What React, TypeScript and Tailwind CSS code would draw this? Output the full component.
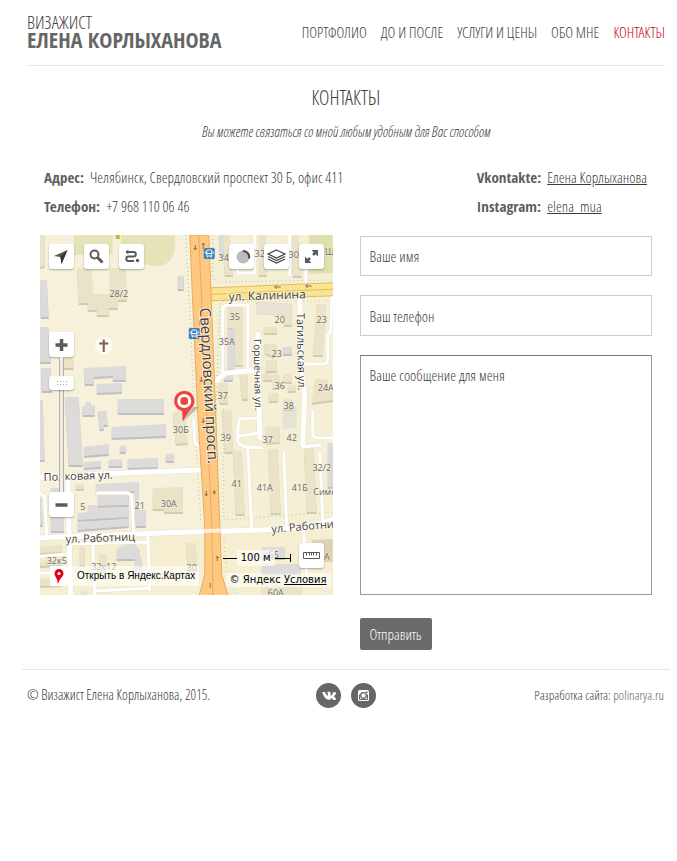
import type { ReactNode } from "react";

const NAV = ["Портфолио", "До и после", "Услуги и цены", "Обо мне", "Контакты"];

const GREY_BUILDINGS = [
  "0,45 7,45 9,82 1,82",
  "0,92 9,92 11,127 0,127",
  "1,133 11,133 12,156 2,156",
  "0,165 3,165 5,225 0,225",
  "25,162 39,162 43,230 29,230",
  "44,133 86,131 86,145 73,145 73,141 54,142 54,149 45,149",
  "57,149 82,148 82,157 57,158",
  "42,172 46,171 46,167 51,167 51,170 55,170 55,180 43,180",
  "58,176 67,176 68,190 64,190 64,194 60,194",
  "78,164 124,164 124,178 78,178",
  "72,192 126,189 126,201 72,203",
  "44,212 69,209 69,219 44,221",
  "80,211 86,210 86,217 80,217",
  "44,227 61,226 61,232 44,233",
  "69,225 82,224 82,231 69,231",
  "88,224 118,223 118,232 88,233",
  "126,219 134,218 134,226 126,226",
  "56,249 99,247 99,275 106,275 106,291 96,291 95,256 56,257",
  "58,260 89,258 89,270 58,271",
  "48,270 58,270 58,273 89,272 89,282 38,285 38,278 48,277",
  "38,287 89,284 89,291 38,295",
  "77,314 88,309 95,309 100,315 100,323 102,323 102,340 95,340 95,324 77,324",
  "11,253 24,253 24,296 11,296",
  "0,262 2,262 3,290 0,290",
  "138,41 144,41 144,54 138,54",
  "179,0 183,0 184,20 180,20",
  "188,94 195,94 195,134 188,134",
  "184,138 193,138 193,145 184,145",
  "243,112 252,112 252,119 243,119",
  "288,208 293,208 293,252 288,252",
  "222,312 245,312 245,323 222,323",
  "222,329 261,329 261,338 222,338",
];

const BEIGE_BUILDINGS = [
  "37,33 52,33 53,59 70,59 70,33 86,33 87,65 78,65 78,73 69,73 69,80 57,80 57,75 48,75 48,68 39,68",
  "24,123 34,123 34,133 24,133",
  "0,0 5,0 5,31 0,32",
  "133,177 145,176 148,208 136,209",
  "0,312 22,310 22,317 0,318",
  "0,326 22,324 22,330 0,331",
  "0,344 22,343 22,350 0,351",
  "40,312 45,312 45,330 40,330",
  "60,319 67,319 67,336 60,336",
  "41,356 47,356 47,360 41,360",
  "146,308 156,308 158,335 148,335",
  "113,253 143,252 143,277 124,277 124,274 113,274",
  "36,249 44,249 44,254 36,254",
  "182,0 190,0 193,40 185,40",
  "219,0 226,0 227,40 219,40",
  "252,0 259,0 262,41 253,41",
  "188,68 203,68 203,130 195,130 194,93 188,93",
  "244,77 252,77 252,90 244,90",
  "224,92 237,92 237,98 224,98",
  "224,109 237,109 237,118 234,122 225,118",
  "226,125 237,125 237,136 226,136",
  "223,138 232,138 232,145 223,145",
  "233,139 240,139 240,153 233,153",
  "243,139 252,139 252,147 243,147",
  "229,158 238,158 238,166 229,166",
  "248,150 256,150 256,156 248,156",
  "244,164 253,164 253,174 244,174",
  "277,69 286,69 283,120 273,120",
  "275,144 288,144 288,152 293,152 293,165 272,168",
  "178,148 188,148 188,168 180,168",
  "200,140 208,140 208,164 202,164",
  "182,175 192,175 193,217 185,217",
  "226,192 240,191 240,207 226,208",
  "193,215 202,215 205,279 196,279",
  "228,214 238,214 241,278 231,278",
  "264,213 274,213 277,277 267,277",
  "222,348 262,346 262,360 222,360",
];

const HOUSE_NUMBERS: [string, number, number][] = [
  ["28/2", 79, 62],
  ["30Б", 141, 198],
  ["30А", 129, 272],
  ["21", 100, 274],
  ["5", 43, 275],
  ["32к5", 17, 329],
  ["32к12", 64, 335],
  ["34", 184, 26],
  ["32", 220, 22],
  ["30", 254, 23],
  ["35", 195, 85],
  ["20", 240, 88],
  ["23", 282, 88],
  ["35А", 187, 110],
  ["23", 237, 122],
  ["37", 183, 164],
  ["36", 240, 154],
  ["24А", 286, 156],
  ["38", 249, 174],
  ["39", 186, 206],
  ["37", 228, 208],
  ["42", 252, 206],
  ["32/2", 282, 236],
  ["41", 197, 252],
  ["41А", 225, 256],
  ["41Б", 260, 256],
  ["Симе", 285, 260],
  ["Ш", 290, 20],
  ["65", 234, 323],
  ["А", 287, 325],
  ["60А", 236, 361],
  ["30", 152, 336],
];

function Buildings({ shapes, fill, shade }: { shapes: string[]; fill: string; shade: string }) {
  return (
    <g>
      {shapes.map((points) => (
        <g key={points}>
          <polygon points={points} fill={shade} transform="translate(0 2)" />
          <polygon points={points} fill={fill} />
        </g>
      ))}
    </g>
  );
}

function BusStop({ x, y }: { x: number; y: number }) {
  return (
    <g transform={`translate(${x} ${y})`}>
      <rect width="11" height="11" rx="1.500" fill="#3b7fc4" />
      <rect x="3" y="2" width="5" height="6" rx="1" fill="none" stroke="#fff" />
      <path d="M3 5.500h5M3.500 8v1.500M7.500 8v1.500M1.500 3.500v2M9.500 3.500v2" stroke="#fff" />
    </g>
  );
}

function CityMap() {
  return (
    <svg
      className="block h-full w-full"
      viewBox="0 0 293 360"
      preserveAspectRatio="xMidYMid slice"
      role="img"
      aria-label="Карта"
    >
      <rect width="293" height="360" fill="#f7f0da" />
      <path d="M153 0H293V360H184L170 290Z" fill="#f5efd6" />
      <path d="M0 304L293 291V360H0Z" fill="#f5eed0" />
      <path d="M34 0H73V19L34 20Z M81 0H135V12Q134 31 115 31L102 29L81 12Z" fill="#e5e4b8" />
      <path d="M269 0H293V38L269 39Z" fill="#dfe0ad" />
      <path d="M76 0H80V4H76Z" fill="#d8ae3a" />
      <path d="M217 67L252 69V81L217 79Z" fill="#e6e2d6" stroke="#dbd6c8" strokeDasharray="2 2" />
      <path d="M243 173L257 171V193L243 194Z" fill="#e6e2d6" />
      <path d="M272 305L293 304V327H272Z" fill="#ddd3b4" />
      <Buildings shapes={BEIGE_BUILDINGS} fill="#ebe3c8" shade="#d3cbb0" />
      <Buildings shapes={GREY_BUILDINGS} fill="#dddada" shade="#c0bec5" />
      <path
        d="M146 0L151 95L155 190L161 285M173 0V40Q174 47 182 47L293 45M172 285L180 70Q181 66 188 66H293M184 165L184 285L293 277M172 304H184L188 350L198 360"
        fill="none"
        stroke="#b9cf96"
        strokeWidth="1.200"
        strokeDasharray="1 3"
      />
      {[
        { stroke: "#e6e0d0", grow: 1 },
        { stroke: "#ffffff", grow: 0 },
      ].map(({ stroke, grow }) => (
        <g key={stroke} fill="none" stroke={stroke} strokeLinecap="round" strokeLinejoin="round">
          <path
            strokeWidth={5 + grow}
            d="M-4 243L60 239L159 235M-4 303L150 297L224 295L262 293Q280 290 297 283M28 243L31 364M218 99L220 203M260 60L261 128L265 160L263 210M176 146L186 138L218 135"
          />
          <path
            strokeWidth={3 + grow}
            d="M183 137V75Q183 70 188 70H208V133M266 30V50M262 129H284Q288 129 288 124V100L291 96L292 60M198 30V38H215V0M250 0V40M220 183L200 184Q198 186 198 205Q198 210 206 212L222 213M199 201L219 198M208 213L212 294M244 218L247 292M263 212L280 210M280 218L283 285M273 176L273 200Q274 203 280 203H297M264 297L267 345M154 185L155 208L160 212M58 258H88Q92 259 92 264L94 297M-4 258Q5 258 5 264L7 300M32 309L109 307M108 300L110 355M53 309L55 364M55 356L110 353M-4 322L28 319M-4 338H28"
          />
        </g>
      ))}
      <path d="M166 59.500L297 54" stroke="#e0bd5b" strokeWidth="14" />
      <path d="M166 59.500L297 54" stroke="#fbe491" strokeWidth="12" />
      <path d="M166 59.500L297 54" stroke="#e0bd5b" />
      <path d="M150 0H169L176 180L180 290L182 340L189 362H159L165 340L165 290L158 180Z" fill="#fec880" stroke="#e8ab62" />
      <path d="M159 0L167 180L172 290L173 342V360" fill="none" stroke="#e8ab62" />
      <path d="M164.500 296L180.500 295.500" stroke="#ffefdb" strokeWidth="4" />
      <g stroke="#8b7352" fill="none">
        <path d="M155.500 10v5M163.500 14v-6M166.500 261v-5M174.500 255v5M177.500 321v5M170.500 353v-5M235 52h6M266 51h6M160 90v-5M161.500 142v5M163.500 183v5" />
        <path d="M154 13l1.500 2 1.500-2M162 10l1.500-2 1.500 2M173 258l1.500-2 1.500 2M165 259l1.500 2 1.500-2M176 323l1.500-2 1.500 2M237 50l-2 2 2 2M268 49l-2 2 2 2M160 145l1.500 2 1.500-2M162 186l1.500 2 1.500-2" />
      </g>
      <BusStop x={164} y={13} />
      <BusStop x={149} y={93} />
      <circle cx="64" cy="110.500" r="9" fill="#fdfbf3" />
      <path d="M64 104.500V117M59.500 108.500H68.500" stroke="#7a6048" strokeWidth="2" />
      <g
        fontFamily='"Open Sans", sans-serif'
        fontSize="9"
        fill="#6d6a68"
        stroke="#f6f0dc"
        strokeWidth="1.500"
        strokeOpacity="0.600"
        paintOrder="stroke"
        textAnchor="middle"
      >
        {HOUSE_NUMBERS.map(([label, x, y]) => (
          <text key={`${label}-${x}`} x={x} y={y}>
            {label}
          </text>
        ))}
      </g>
      <g
        fontFamily='"Open Sans", sans-serif'
        fontSize="11"
        fill="#3f3f3f"
        stroke="#fffdf5"
        strokeWidth="2"
        strokeOpacity="0.700"
        paintOrder="stroke"
      >
        <text transform="translate(189 66) rotate(-2)" fontSize="12">ул. Калинина</text>
        <text transform="translate(160 73) rotate(87)" fontSize="15">Свердловский просп.</text>
        <text transform="translate(214 104) rotate(89)" fontSize="10">Горшечная ул.</text>
        <text transform="translate(257 78) rotate(89)" fontSize="11">Тагильская ул.</text>
        <text transform="translate(4 246) rotate(-2)">Полковая ул.</text>
        <text transform="translate(26 308) rotate(-2)">ул. Работниц</text>
        <text transform="translate(232 298) rotate(-5)">ул. Работниц</text>
      </g>
      <path d="M143 187L159 172L151 172Z" fill="#8b8370" opacity="0.500" />
      <path
        d="M144.500 155.500a10.500 10.500 0 0 1 8 17.300Q147 180 142.500 188L142 176.200a10.500 10.500 0 0 1 2.500-20.700Z"
        fill="#eb4542"
        stroke="#fff"
        strokeWidth="0.600"
      />
      <circle cx="144.500" cy="166" r="7" fill="#fff" />
      <circle cx="144.500" cy="166" r="4" fill="#eb4542" />
    </svg>
  );
}

function MapButton({ label, children }: { label: string; children: ReactNode }) {
  return (
    <button
      type="button"
      aria-label={label}
      className="flex size-[25px] items-center justify-center rounded-[3px] bg-white shadow-[0_1px_2px_rgba(0,0,0,0.3)]"
    >
      <svg width="25" height="25" viewBox="0 0 25 25" fill="none" stroke="#5a5a5a" strokeWidth="2">
        {children}
      </svg>
    </button>
  );
}

function MapPanel() {
  return (
    <section
      aria-label="Карта проезда"
      className="relative h-[360px] overflow-hidden font-['DejaVu_Sans',sans-serif] text-black"
    >
      <CityMap />
      <div className="absolute inset-x-[9px] top-[9px] flex justify-between">
        <div className="flex gap-2.5">
          <MapButton label="Моё местоположение">
            <path d="M18.500 6L5 12L11.500 13L12.500 20Z" fill="#555" stroke="none" />
            <path d="M18.500 6L11.500 13L12.500 20Z" fill="#333" stroke="none" />
          </MapButton>
          <MapButton label="Поиск">
            <circle cx="10.500" cy="10.500" r="4" />
            <path d="M13.500 13.500L18.500 18.500" strokeWidth="3" />
          </MapButton>
          <MapButton label="Маршрут">
            <path d="M8.500 8H14.500a2.300 2.300 0 0 1 0 4.600H9.500a2 2 0 0 0 0 4.400H15" />
            <circle cx="8.500" cy="8" r="1.700" fill="#5a5a5a" stroke="none" />
            <circle cx="18.500" cy="16.500" r="1.700" fill="#5a5a5a" stroke="none" />
          </MapButton>
        </div>
        <div className="flex gap-2.5">
          <MapButton label="Пробки">
            <circle cx="14" cy="13" r="6.500" fill="#bbb" stroke="none" />
            <path d="M14 7a6 6 0 0 1 6 7.500" stroke="#444" />
          </MapButton>
          <MapButton label="Слои">
            <path
              d="M12.500 6L21 10L12.500 14L4 10Z M4 12.500L12.500 16.500L21 12.500 M4 15L12.500 19L21 15"
              strokeWidth="1.200"
              stroke="#444"
            />
          </MapButton>
          <MapButton label="На весь экран">
            <path d="M11 14L8 17M14 11L17 8" strokeWidth="2.500" />
            <path d="M6 12.500V19H12.500ZM19 12.500V6H12.500Z" fill="#5a5a5a" stroke="none" />
          </MapButton>
        </div>
      </div>
      <div className="absolute left-[9px] top-[97px] flex w-[25px] flex-col items-center">
        <MapButton label="Приблизить">
          <path d="M12.500 7V19M6.500 13H18.500" strokeWidth="3.500" />
        </MapButton>
        <div className="relative flex h-[135px] w-[5px] justify-center border-x border-[#b5b0a5] bg-[#f0ece4]">
          <button
            type="button"
            aria-label="Масштаб"
            className="absolute top-[19px] flex h-[14px] w-[25px] items-center justify-center rounded-[3px] bg-white shadow-[0_1px_2px_rgba(0,0,0,0.3)]"
          >
            <svg width="10" height="4" viewBox="0 0 10 4" fill="#aaa">
              <path d="M0 0h1v1H0zM3 0h1v1H3zM6 0h1v1H6zM9 0h1v1H9zM0 3h1v1H0zM3 3h1v1H3zM6 3h1v1H6zM9 3h1v1H9z" />
            </svg>
          </button>
        </div>
        <MapButton label="Отдалить">
          <path d="M6.500 13H18.500" strokeWidth="3.500" />
        </MapButton>
      </div>
      <div className="absolute right-[42px] top-[315px] flex items-center text-[10px] leading-4">
        <span className="h-px w-[14px] bg-black" />
        <span className="rounded-xs bg-white/60 px-1">100 м</span>
        <span className="h-px w-[15px] bg-black" />
        <span className="h-2 w-px bg-black" />
      </div>
      <div className="absolute right-[9px] top-[308px]">
        <MapButton label="Линейка">
          <path
            d="M4.500 9.500H20.500V15.500H4.500ZM7.500 10V12.500M10.500 10V12.500M12.500 10V12.500M14.500 10V12.500M17.500 10V12.500"
            strokeWidth="1"
          />
        </MapButton>
      </div>
      <a
        href="#map"
        className="absolute left-[10px] top-[331px] flex h-5 items-center bg-white/60 pr-1 font-['Liberation_Sans',sans-serif] text-[10px]"
      >
        <svg width="27" height="20" viewBox="0 0 27 20">
          <path d="M0 0H15L20 10L15 20H0Z" fill="#fff" />
          <path
            d="M9 3a4.500 4.500 0 0 1 4.500 4.500C13.500 11 9.500 12 8.500 17H7.500C8 12.500 4.500 11 4.500 7.500A4.500 4.500 0 0 1 9 3Z"
            fill="#e3000f"
          />
          <circle cx="9" cy="7.500" r="1.600" fill="#fff" />
        </svg>
        Открыть в Яндекс.Картах
      </a>
      <p className="absolute right-0.5 top-[338px] bg-white/60 px-1 text-[10px] leading-[14px]">
        © Яндекс{" "}
        <a href="#terms" className="underline">
          Условия
        </a>
      </p>
    </section>
  );
}

function Label({ children }: { children: ReactNode }) {
  return <dt className="font-['Open_Sans_Condensed',sans-serif] font-bold text-[#5f5f5f]">{children}</dt>;
}

export default function App() {
  return (
    <div className="pl-[22px] pr-[7px] font-['Open_Sans_Condensed_Light','Open_Sans_Condensed',sans-serif] text-[15px] leading-5 text-[#3c3c3c]">
      <header className="mx-[5px] flex items-start justify-between border-b border-[#e5e5e5] pb-4 pt-3.5">
        <a href="#home" className="uppercase">
          <span className="block text-[18px] leading-4">Визажист</span>
          <strong className="block font-['Open_Sans_Condensed',sans-serif] text-[22px] leading-[19px] text-[#666]">
            Елена Корлыханова
          </strong>
        </a>
        <nav className="flex gap-3.5 pt-2 uppercase">
          {NAV.map((item) => (
            <a key={item} href="#page" className="last:text-[#c8001e]">
              {item}
            </a>
          ))}
        </nav>
      </header>

      <main className="px-[18px]">
        <h1 className="pt-[18px] text-center text-[20px] leading-7 uppercase">Контакты</h1>
        <p className="pt-2.5 text-center text-sm italic">Вы можете связаться со мной любым удобным для Вас способом</p>

        <div className="flex justify-between pl-1 pr-[5px] pt-[21px] leading-[29px]">
          <dl>
            <div className="flex gap-1.5">
              <Label>Адрес:</Label>
              <dd>Челябинск, Свердловский проспект 30 Б, офис 411</dd>
            </div>
            <div className="flex gap-1.5">
              <Label>Телефон:</Label>
              <dd>+7 968 110 06 46</dd>
            </div>
          </dl>
          <dl className="grid grid-cols-[auto_auto] gap-x-1.5">
            <Label>Vkontakte:</Label>
            <dd>
              <a href="#vk" className="underline">
                Елена Корлыханова
              </a>
            </dd>
            <Label>Instagram:</Label>
            <dd>
              <a href="#instagram" className="underline">
                elena_mua
              </a>
            </dd>
          </dl>
        </div>

        <div className="grid grid-cols-2 gap-x-[27px] pt-3.5">
          <MapPanel />
          <form className="flex flex-col items-start pt-px">
            <input
              aria-label="Ваше имя"
              placeholder="Ваше имя"
              className="h-10 w-full border border-[#ccc] px-[9px] placeholder:text-[#3c3c3c]"
            />
            <input
              aria-label="Ваш телефон"
              type="tel"
              placeholder="Ваш телефон"
              className="mt-[19px] h-[41px] w-full border border-[#ccc] px-[9px] placeholder:text-[#3c3c3c]"
            />
            <textarea
              aria-label="Ваше сообщение для меня"
              placeholder="Ваше сообщение для меня"
              className="mt-[19px] block h-60 w-full resize-none border border-[#999] border-t-[#777] px-[9px] py-[9px] placeholder:text-[#3c3c3c]"
            />
            <button type="submit" className="mt-[23px] h-8 rounded-xs bg-[#6a6a6a] px-2.5 text-white">
              Отправить
            </button>
          </form>
        </div>
      </main>

      <footer className="mt-[19px] grid grid-cols-[1fr_auto_1fr] items-start border-t border-[#e5e5e5] pl-[5px] pr-1.5 pt-[13px]">
        <p className="pt-0.5 text-sm">© Визажист Елена Корлыханова, 2015.</p>
        <div className="flex gap-2.5">
          <a
            href="#vk"
            aria-label="Vkontakte"
            className="flex size-[25px] items-center justify-center rounded-full bg-[#666]"
          >
            <svg width="15" height="15" viewBox="0 0 24 24" fill="#fff">
              <path d="M13.160 18.990h1.360s.41-.05.620-.27c.190-.21.190-.6.190-.6s-.03-1.820.820-2.090c.83-.26 1.900 1.760 3.040 2.540.86.590 1.510.46 1.510.46l3.040-.04s1.590-.1.840-1.350c-.06-.1-.44-.92-2.250-2.610-1.900-1.760-1.650-1.480.640-4.530 1.390-1.860 1.950-2.990 1.780-3.480-.17-.46-1.200-.34-1.200-.34l-3.420.02s-.25-.03-.44.080c-.19.110-.31.370-.31.370s-.54 1.440-1.260 2.670c-1.520 2.580-2.130 2.720-2.380 2.560-.58-.37-.43-1.510-.43-2.310 0-2.520.38-3.570-.75-3.840-.37-.09-.65-.15-1.610-.16-1.230-.01-2.270 0-2.860.290-.39.190-.7.620-.51.640.23.030.75.140 1.030.51.360.48.340 1.570.340 1.570s.21 2.990-.48 3.360c-.47.260-1.120-.27-2.510-2.660-.71-1.230-1.250-2.590-1.250-2.590s-.1-.25-.29-.39c-.22-.17-.54-.22-.54-.22l-3.250.02s-.49.010-.67.230c-.16.190-.01.590-.01.590s2.540 5.950 5.420 8.940c2.640 2.750 5.640 2.570 5.640 2.570z" />
            </svg>
          </a>
          <a
            href="#instagram"
            aria-label="Instagram"
            className="flex size-[25px] items-center justify-center rounded-full bg-[#666]"
          >
            <svg width="11" height="11" viewBox="0 0 11 11">
              <rect width="11" height="11" rx="1.500" fill="#fff" />
              <path d="M1.500 4.500V9.500H9.500V4.500" fill="none" stroke="#666" />
              <circle cx="5.500" cy="5.500" r="2.800" fill="#fff" stroke="#666" strokeWidth="1.300" />
              <path d="M8 1.500h1.500V3H8z" fill="#666" />
            </svg>
          </a>
        </div>
        <p className="pt-0.5 text-right text-[13px]">
          Разработка сайта:{" "}
          <a href="#author" className="text-[#666]">
            polinarya.ru
          </a>
        </p>
      </footer>
    </div>
  );
}
